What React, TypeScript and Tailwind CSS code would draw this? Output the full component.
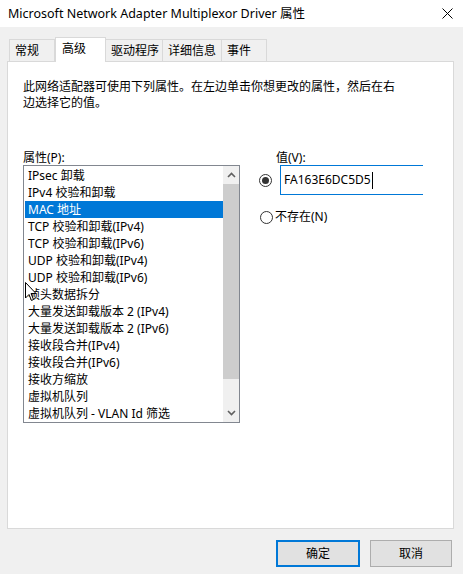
import React from "react";

const font = { fontFamily: '"Noto Sans", "Noto Sans CJK SC", sans-serif' };

const items = [
  "IPsec 卸载",
  "IPv4 校验和卸载",
  "MAC 地址",
  "TCP 校验和卸载(IPv4)",
  "TCP 校验和卸载(IPv6)",
  "UDP 校验和卸载(IPv4)",
  "UDP 校验和卸载(IPv6)",
  "帧头数据拆分",
  "大量发送卸载版本 2 (IPv4)",
  "大量发送卸载版本 2 (IPv6)",
  "接收段合并(IPv4)",
  "接收段合并(IPv6)",
  "接收方缩放",
  "虚拟机队列",
  "虚拟机队列 - VLAN Id 筛选",
];

const tabs = [
  { label: "常规", w: "w-[46px]", sel: false },
  { label: "高级", w: "w-[51px]", sel: true },
  { label: "驱动程序", w: "w-[58px]", sel: false },
  { label: "详细信息", w: "w-[60px]", sel: false },
  { label: "事件", w: "w-[46px]", sel: false },
];

export default function App() {
  return (
    <div
      className="w-[463px] h-[574px] bg-[#f0f0f0] text-[12px] text-black flex flex-col overflow-hidden"
      style={font}
    >
      {/* Title bar */}
      <div className="h-[27px] bg-white flex items-center justify-between pl-[8px] pr-[10px]">
        <span className="text-[12.5px] leading-[16px]">Microsoft Network Adapter Multiplexor Driver 属性</span>
        <svg width="11" height="11" viewBox="0 0 11 11" className="mr-[0px]">
          <path d="M0.5 0.5 L10.5 10.5 M10.5 0.5 L0.5 10.5" stroke="#000" strokeWidth="1" />
        </svg>
      </div>

      {/* Tabs */}
      <div className="mt-[10px] h-[24px] flex items-end pl-[9px] relative z-10">
        {tabs.map((t) =>
          t.sel ? (
            <div
              key={t.label}
              className={`${t.w} h-[25px] -mb-[1px] bg-white border border-[#d9d9d9] border-b-0 flex items-start pl-[6px] pt-[3px] leading-[16px]`}
            >
              {t.label}
            </div>
          ) : (
            <div
              key={t.label}
              className={`${t.w} h-[22px] bg-[#f0f0f0] border border-[#d9d9d9] border-b-0 -ml-[1px] first:ml-0 flex items-start pl-[5px] pt-[3px] leading-[16px]`}
            >
              {t.label}
            </div>
          )
        )}
      </div>

      {/* Panel */}
      <div className="ml-[7px] w-[447px] h-[468px] bg-white border border-[#d9d9d9] relative">
        <div className="pl-[15px] pt-[17px] leading-[16px] w-[390px]">
          此网络适配器可使用下列属性。在左边单击你想更改的属性，然后在右边选择它的值。
        </div>
        <div className="flex mt-[39px] pl-[15px]">
          {/* Left column */}
          <div className="flex flex-col w-[217px]">
            <div className="h-[15px] leading-[15px]">属性(P):</div>
            <div className="h-[258px] border border-[#828790] flex relative">
              <div className="flex-1 pt-[1px] pl-[1px] overflow-hidden">
                {items.map((it, i) => (
                  <div
                    key={it}
                    className={`h-[17px] leading-[17px] pl-[3px] whitespace-nowrap ${
                      i === 2 ? "bg-[#0078d7] text-white" : ""
                    }`}
                  >
                    {it}
                  </div>
                ))}
              </div>
              {/* Scrollbar */}
              <div className="w-[16px] bg-[#f0f0f0] flex flex-col">
                <div className="h-[18px] flex items-center justify-center">
                  <svg width="9" height="6" viewBox="0 0 9 6">
                    <path d="M1 5 L4.5 1.5 L8 5" stroke="#606060" strokeWidth="1.6" fill="none" />
                  </svg>
                </div>
                <div className="h-[195px] bg-[#cdcdcd]" />
                <div className="flex-1 flex items-end justify-center pb-[6px]">
                  <svg width="9" height="6" viewBox="0 0 9 6">
                    <path d="M1 1 L4.5 4.5 L8 1" stroke="#606060" strokeWidth="1.6" fill="none" />
                  </svg>
                </div>
              </div>
              {/* Mouse pointer */}
              <svg
                width="13"
                height="20"
                viewBox="0 0 13 20"
                className="absolute left-[1px] top-[116px]"
              >
                <path
                  d="M0.5 0.5 L0.5 16 L4 12.5 L6.5 18.5 L8.5 17.5 L6 11.5 L11 11.5 Z"
                  fill="#fff"
                  stroke="#000"
                  strokeWidth="1"
                />
              </svg>
            </div>
          </div>

          {/* Right column */}
          <div className="flex flex-col ml-[19px]">
            <div className="h-[15px] leading-[15px] pl-[17px]">值(V):</div>
            <div className="flex items-center mt-0">
              <div className="w-[13px] h-[13px] rounded-full border border-[#333] flex items-center justify-center">
                <div className="w-[7px] h-[7px] rounded-full bg-[#333]" />
              </div>
              <div className="ml-[8px] w-[143px] h-[30px] border-l border-t border-b border-[#0078d7] flex items-center pl-[3px]">
                <span className="leading-[16px]">FA163E6DC5D5</span>
                <span className="w-[1px] h-[17px] bg-black ml-[1px]" />
              </div>
            </div>
            <div className="flex items-center mt-[14px] ml-[1px]">
              <div className="w-[13px] h-[13px] rounded-full border border-[#333]" />
              <span className="ml-[2px] leading-[16px]">不存在(N)</span>
            </div>
          </div>
        </div>
      </div>

      {/* Buttons */}
      <div className="flex justify-end gap-[10px] pr-[11px] mt-[11px]">
        <button className="w-[84px] h-[27px] bg-[#e1e1e1] border-2 border-[#0078d7] leading-[16px]">
          确定
        </button>
        <button className="w-[82px] h-[27px] bg-[#e1e1e1] border border-[#adadad] leading-[16px]">
          取消
        </button>
      </div>
    </div>
  );
}
